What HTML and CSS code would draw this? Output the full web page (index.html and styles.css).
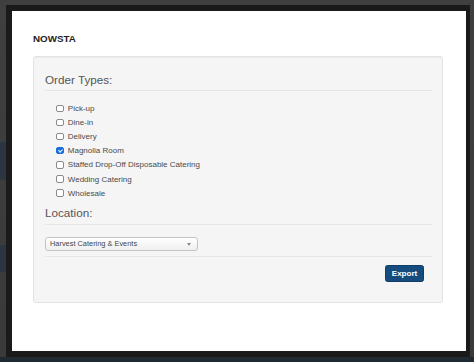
FILE: index.html
```html
<!DOCTYPE html>
<html lang="en">
<head>
<meta charset="utf-8">
<title>NOWSTA</title>
<link rel="stylesheet" href="styles.css">
</head>
<body>
<div class="frame">
  <div class="modal">
    <h1 class="title">NOWSTA</h1>
    <div class="well">
      <h2 class="legend">Order Types:</h2>
      <ul class="checks">
        <li><span class="cb"></span><span class="lbl">Pick-up</span></li>
        <li><span class="cb"></span><span class="lbl">Dine-in</span></li>
        <li><span class="cb"></span><span class="lbl">Delivery</span></li>
        <li><span class="cb checked"></span><span class="lbl">Magnolia Room</span></li>
        <li><span class="cb"></span><span class="lbl">Staffed Drop-Off Disposable Catering</span></li>
        <li><span class="cb"></span><span class="lbl">Wedding Catering</span></li>
        <li><span class="cb"></span><span class="lbl">Wholesale</span></li>
      </ul>
      <h2 class="legend legend-loc">Location:</h2>
      <div class="select-row">
        <div class="select"><span class="select-text">Harvest Catering &amp; Events</span><span class="caret"></span></div>
      </div>
      <div class="actions">
        <button class="btn" type="button">Export</button>
      </div>
    </div>
  </div>
</div>
</body>
</html>
```

FILE: styles.css
```css
html, body {
  margin: 0;
  padding: 0;
}

body {
  width: 474px;
  height: 362px;
  overflow: hidden;
  font-family: "Liberation Sans", Arial, sans-serif;
  background:
    linear-gradient(to bottom, transparent 142px, #2b3641 142px 180px, transparent 180px 245px, #2b3641 245px 272px, transparent 272px) 0 0 / 6px 100% no-repeat,
    linear-gradient(to bottom, #3f3f3f 0, #3a3a3a 357px, #1f2a33 357px);
  padding-top: 5px;
  box-sizing: border-box;
}

.frame {
  margin-left: 6px;
  width: 464px;
  height: 352px;
  box-sizing: border-box;
  padding: 6px 4px 6px 6px;
  background: #1a1a1a;
}

.modal {
  background: #fff;
  height: 340px;
  box-sizing: border-box;
  padding: 22px 23px 0 21px;
}

.title {
  margin: 0;
  font-size: 9.8px;
  line-height: 12px;
  font-weight: bold;
  color: #1e1e1e;
}

.well {
  margin-top: 11px;
  background: #f5f5f5;
  border: 1px solid #e3e3e3;
  border-radius: 3px;
  padding: 16px 10px 20px 11px;
  box-shadow: inset 0 1px 1px rgba(0, 0, 0, 0.04);
}

.legend {
  margin: 0;
  font-size: 11.7px;
  line-height: 14px;
  font-weight: normal;
  color: #555;
  padding-bottom: 3px;
  border-bottom: 1px solid #e6e6e6;
}

.legend-loc {
  margin-top: 5.6px;
  padding-bottom: 4px;
}

.checks {
  list-style: none;
  margin: 10.2px 0 0 0;
  padding: 0 0 0 11px;
}

.checks li {
  display: flex;
  align-items: center;
  height: 14.17px;
  font-size: 8px;
  color: #4a4a4a;
}

.cb {
  width: 7.5px;
  height: 7.5px;
  box-sizing: border-box;
  border: 1px solid #8a8a8a;
  border-radius: 2px;
  background: #fff;
  position: relative;
  flex: none;
}

.cb.checked {
  background: #1a6fe0;
  border-color: #1a6fe0;
}

.cb.checked::after {
  content: "";
  position: absolute;
  left: 1.6px;
  top: 0.1px;
  width: 1.6px;
  height: 3.3px;
  border: solid #fff;
  border-width: 0 1.2px 1.2px 0;
  transform: rotate(45deg);
}

.lbl {
  margin-left: 4.3px;
}

.select-row {
  padding-top: 11.7px;
  padding-bottom: 5px;
  border-bottom: 1px solid #e6e6e6;
}

.select {
  width: 153px;
  height: 14px;
  box-sizing: border-box;
  border: 1px solid #c4c4c4;
  border-radius: 3px;
  background: linear-gradient(#ffffff, #efefef);
  display: flex;
  align-items: center;
  padding-left: 4px;
  position: relative;
}

.select-text {
  font-size: 7.4px;
  color: #444;
}

.caret {
  position: absolute;
  right: 6px;
  top: 5px;
  width: 0;
  height: 0;
  border-left: 2px solid transparent;
  border-right: 2px solid transparent;
  border-top: 3px solid #888;
}

.actions {
  display: flex;
  justify-content: flex-end;
  padding-top: 8.3px;
  padding-right: 8px;
}

.btn {
  width: 39px;
  height: 17px;
  padding: 0;
  border: 1px solid #0f3d66;
  border-radius: 2.5px;
  background: #164b7d;
  color: #fff;
  font-family: "Liberation Sans", Arial, sans-serif;
  font-weight: bold;
  font-size: 8px;
  line-height: 15px;
  cursor: pointer;
}
```
